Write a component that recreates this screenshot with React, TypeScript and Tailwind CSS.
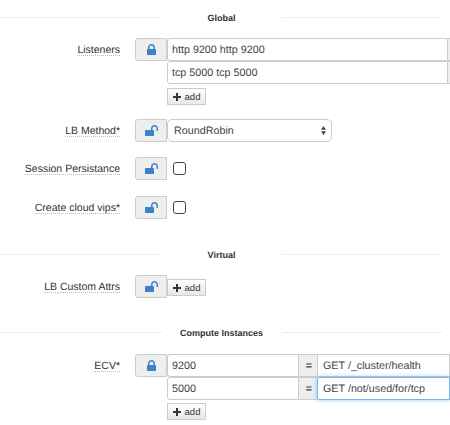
import React from "react";

function LockIcon() {
  return (
    <svg viewBox="320 128 1152 1408" className="ml-px h-[11px] w-[9px] fill-[#3d82c8]">
      <path d="M640 768h512v-192q0-106-75-181t-181-75-181 75-75 181v192zm832 96v576q0 40-28 68t-68 28h-960q-40 0-68-28t-28-68v-576q0-40 28-68t68-28h32v-192q0-184 132-316t316-132 316 132 132 316v192h32q40 0 68 28t28 68z" />
    </svg>
  );
}

function UnlockIcon() {
  return (
    <svg viewBox="0 128 1664 1408" className="ml-px h-[11px] w-[13px] fill-[#3d82c8]">
      <path d="M1664 576v256q0 26-19 45t-45 19h-64q-26 0-45-19t-19-45v-256q0-106-75-181t-181-75-181 75-75 181v192h96q40 0 68 28t28 68v576q0 40-28 68t-68 28h-960q-40 0-68-28t-28-68v-576q0-40 28-68t68-28h672v-192q0-185 131.5-316.5t316.5-131.5 316.5 131.5 131.5 316.5z" />
    </svg>
  );
}

function Section({ title }: { title: string }) {
  return (
    <div className="flex h-3 items-center">
      <div className="h-px w-[162px] bg-[#ececec]" />
      <h2 className="w-[119px] whitespace-nowrap pt-[2px] text-center text-[9px] leading-[13px] font-bold text-[#333]">{title}</h2>
      <div className="ml-px h-px w-[160px] bg-[#ececec]" />
    </div>
  );
}

function Row({ label, locked = false, children }: { label: string; locked?: boolean; children: React.ReactNode }) {
  return (
    <div className="flex items-start">
      <div className="flex w-[120px] shrink-0 justify-end pt-[5px]">
        <label className="h-[13px] whitespace-nowrap border-b border-dotted border-[#bbb] text-[10.5px] leading-[15px] text-[#333]">
          {label}
        </label>
      </div>
      <div className="ml-[15px] flex h-[23px] w-8 shrink-0 items-center justify-center rounded-l-[3px] border border-[#ccc] bg-[#eee]">
        {locked ? <LockIcon /> : <UnlockIcon />}
      </div>
      {children}
    </div>
  );
}

function AddButton() {
  return (
    <button className="flex h-[17px] w-[39px] items-center justify-center gap-[4px] border border-[#ccc] bg-linear-to-b from-white to-[#e8e8e8] text-[9.5px] leading-none text-[#333]">
      <svg viewBox="0 0 8 8" className="size-2 fill-[#333]">
        <path d="M3 0h2V3h3v2H5v3H3V5H0V3H3z" />
      </svg>
      <span>add</span>
    </button>
  );
}

function Listener({ value }: { value: string }) {
  return (
    <div className="flex h-[23px]">
      <div className="w-[281px] shrink-0 rounded-l-[3px] border border-[#ccc] bg-white pl-1 leading-[22px]">{value}</div>
      <div className="w-2 shrink-0 border-y border-[#ccc] bg-[#eee]" />
    </div>
  );
}

function Check({ port, request, focused = false }: { port: string; request: string; focused?: boolean }) {
  return (
    <div className="flex h-[23px]">
      <div className="w-[132px] shrink-0 rounded-l-[3px] border border-[#ccc] bg-white pl-1 leading-[22px]">{port}</div>
      <div className="w-[18px] shrink-0 border-y border-[#ccc] bg-[#eee] pl-[2px] text-center leading-[22px] font-bold">=</div>
      <div
        className={
          focused
            ? "z-10 w-[133px] shrink-0 rounded-l-[2px] border border-[#74b6f0] bg-white pl-[5px] leading-[22px] shadow-[0_0_4px_rgba(102,175,233,0.7)]"
            : "w-[133px] shrink-0 border border-[#ccc] bg-white pl-[5px] leading-[22px]"
        }
      >
        {request}
      </div>
    </div>
  );
}

function Checkbox() {
  return <div className="mt-[5px] ml-[6px] size-[13px] rounded-[3px] border-[1.5px] border-[#444] bg-white" />;
}

export default function App() {
  return (
    <main className="h-[425px] w-[450px] overflow-hidden bg-white font-['Liberation_Sans',Arial,sans-serif] text-[10.75px] text-[#444] [text-rendering:geometricPrecision]">
      <div className="pt-[11px]">
        <Section title="Global" />
      </div>
      <div className="mt-[15px]">
        <Row label="Listeners" locked>
          <div>
            <Listener value="http 9200 http 9200" />
            <Listener value="tcp 5000 tcp 5000" />
            <div className="mt-1"><AddButton /></div>
          </div>
        </Row>
      </div>
      <div className="mt-[14px]">
        <Row label="LB Method*">
          <div className="flex h-[23px] w-[165px] items-center justify-between rounded-[5px] border border-[#ccc] bg-white pr-[5px] pl-[6px]">
            <span className="leading-[22px]">RoundRobin</span>
            <svg viewBox="0 0 5 9" className="h-[9px] w-[5px] fill-[#444]">
              <path d="M0 3.8 2.5 0 5 3.8zM0 5.2h5L2.5 9z" />
            </svg>
          </div>
        </Row>
      </div>
      <div className="mt-[15px]">
        <Row label="Session Persistance"><Checkbox /></Row>
      </div>
      <div className="mt-4">
        <Row label="Create cloud vips*"><Checkbox /></Row>
      </div>
      <div className="mt-[29px]">
        <Section title="Virtual" />
      </div>
      <div className="mt-[15px]">
        <Row label="LB Custom Attrs">
          <div className="pt-1"><AddButton /></div>
        </Row>
      </div>
      <div className="mt-[28px]">
        <Section title="Compute Instances" />
      </div>
      <div className="mt-4">
        <Row label="ECV*" locked>
          <div>
            <Check port="9200" request="GET /_cluster/health" />
            <Check port="5000" request="GET /not/used/for/tcp" focused />
            <div className="mt-[3px]"><AddButton /></div>
          </div>
        </Row>
      </div>
    </main>
  );
}
